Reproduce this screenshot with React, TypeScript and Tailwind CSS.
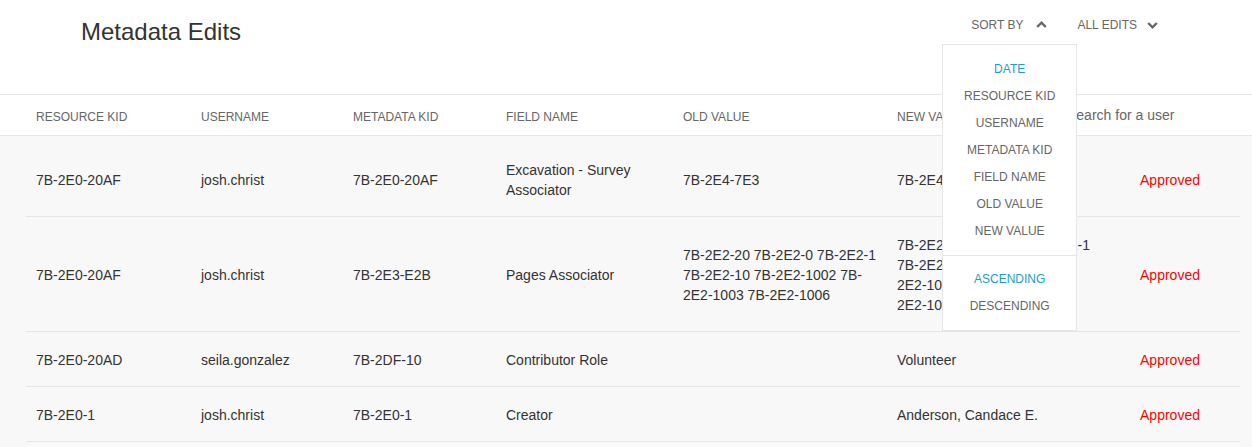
import React from "react";

type Row = {
  resource: string;
  user: string;
  meta: string;
  field: string;
  oldValue: string;
  newValue: string;
  status: string;
};

const rows: Row[] = [
  {
    resource: "7B-2E0-20AF",
    user: "josh.christ",
    meta: "7B-2E0-20AF",
    field: "Excavation - Survey Associator",
    oldValue: "7B-2E4-7E3",
    newValue: "7B-2E4-7E5",
    status: "Approved",
  },
  {
    resource: "7B-2E0-20AF",
    user: "josh.christ",
    meta: "7B-2E3-E2B",
    field: "Pages Associator",
    oldValue: "7B-2E2-20 7B-2E2-0 7B-2E2-1 7B-2E2-10 7B-2E2-1002 7B-2E2-1003 7B-2E2-1006",
    newValue:
      "7B-2E2-20 7B-2E2-0 7B-2E2-1 7B-2E2-10 7B-2E2-1002 7B-2E2-1003 7B-2E2-1006 7B-2E2-1007",
    status: "Approved",
  },
  {
    resource: "7B-2E0-20AD",
    user: "seila.gonzalez",
    meta: "7B-2DF-10",
    field: "Contributor Role",
    oldValue: "",
    newValue: "Volunteer",
    status: "Approved",
  },
  {
    resource: "7B-2E0-1",
    user: "josh.christ",
    meta: "7B-2E0-1",
    field: "Creator",
    oldValue: "",
    newValue: "Anderson, Candace E.",
    status: "Approved",
  },
];

const sortOptions = [
  "DATE",
  "RESOURCE KID",
  "USERNAME",
  "METADATA KID",
  "FIELD NAME",
  "OLD VALUE",
  "NEW VALUE",
];

function ChevronUp() {
  return (
    <svg width="11" height="7" viewBox="0 0 11 7" fill="none" className="mt-[-1px]">
      <path d="M1.2 6 L5.5 1.7 L9.8 6" stroke="#666" strokeWidth="2.4" strokeLinecap="butt" />
    </svg>
  );
}

function ChevronDown() {
  return (
    <svg width="11" height="7" viewBox="0 0 11 7" fill="none">
      <path d="M1.2 1 L5.5 5.3 L9.8 1" stroke="#666" strokeWidth="2.4" strokeLinecap="butt" />
    </svg>
  );
}

export default function App() {
  return (
    <div className="flex h-[447px] w-full flex-col overflow-hidden bg-white font-['Liberation_Sans',Arial,sans-serif] text-[#333]">
      {/* Top bar */}
      <div className="flex h-[94px] shrink-0 items-start">
        <h1 className="pl-[81px] pt-[18px] text-[24px] leading-[28px] font-normal text-[#333]">
          Metadata Edits
        </h1>
        <div className="ml-auto flex items-center gap-[30px] pr-[94px] pt-[17px] text-[12px] leading-[16px] text-[#666]">
          <div className="relative">
            <button className="flex items-center gap-[13px] uppercase">
              <span>Sort By</span>
              <ChevronUp />
            </button>
            <div className="absolute left-[-29px] top-[27px] z-10 w-[135px] border border-[#e6e6e6] bg-white text-center text-[12px] text-[#666]">
              <div className="pb-[10px] pt-[11px]">
                {sortOptions.map((o, i) => (
                  <div
                    key={o}
                    className={
                      i === 0
                        ? "h-[27px] leading-[27px] text-[#1b9bd1]"
                        : "h-[27px] leading-[27px]"
                    }
                  >
                    {o}
                  </div>
                ))}
              </div>
              <div className="border-t border-[#e6e6e6] pb-[10px] pt-[10px]">
                <div className="h-[27px] leading-[27px] text-[#1b9bd1]">ASCENDING</div>
                <div className="h-[27px] leading-[27px]">DESCENDING</div>
              </div>
            </div>
          </div>
          <button className="flex items-center gap-[10px] uppercase">
            <span>All Edits</span>
            <ChevronDown />
          </button>
        </div>
      </div>

      {/* Header row */}
      <div className="shrink-0 border-y border-[#e6e6e6] bg-white">
        <div className="ml-[26px] grid h-[40px] w-[1214px] grid-cols-[165px_152px_153px_177px_214px_170px_183px] text-[12px] leading-[16px] text-[#666]">
          <div className="pl-[10px] pt-[14px]">RESOURCE KID</div>
          <div className="pl-[10px] pt-[14px]">USERNAME</div>
          <div className="pl-[10px] pt-[14px]">METADATA KID</div>
          <div className="pl-[10px] pt-[14px]">FIELD NAME</div>
          <div className="pl-[10px] pt-[14px]">OLD VALUE</div>
          <div className="pl-[10px] pt-[14px]">NEW VALUE</div>
          <div className="pl-[10px] pt-[10px]">
            <input
              type="text"
              placeholder="Search for a user"
              className="w-full bg-transparent text-[14px] leading-[20px] text-[#555] outline-none placeholder:text-[#666]"
            />
          </div>
        </div>
      </div>

      {/* Body */}
      <div className="flex-1 bg-[#f8f8f8] pt-[6px]">
        <div className="ml-[26px] w-[1214px]">
          {rows.map((r, i) => (
            <div
              key={i}
              className="grid grid-cols-[165px_152px_153px_177px_214px_213px_140px] items-center border-b border-[#e6e6e6] pb-[16px] pt-[18px] text-[14px] leading-[20px] text-[#333]"
            >
              <div className="pl-[10px] pr-[8px]">{r.resource}</div>
              <div className="pl-[10px] pr-[8px]">{r.user}</div>
              <div className="pl-[10px] pr-[8px]">{r.meta}</div>
              <div className="pl-[10px] pr-[8px]">{r.field}</div>
              <div className="pl-[10px] pr-[8px]">{r.oldValue}</div>
              <div className="pl-[10px] pr-[8px]">{r.newValue}</div>
              <div className="text-center text-[#ff0000]">{r.status}</div>
            </div>
          ))}
        </div>
      </div>
    </div>
  );
}
